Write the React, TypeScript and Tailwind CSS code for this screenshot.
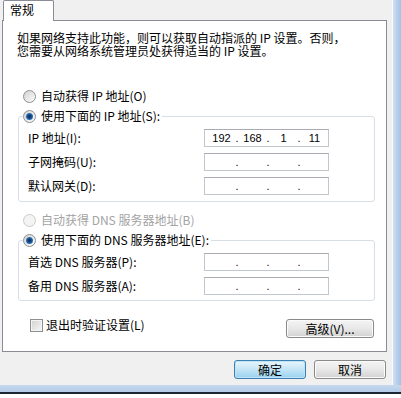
import React from 'react'

function Radio({ checked, disabled }: { checked?: boolean; disabled?: boolean }) {
  return (
    <span
      className={`w-[13px] h-[13px] shrink-0 rounded-full border flex items-center justify-center ${
        disabled
          ? 'border-[#cacaca] bg-[#f4f4f4]'
          : 'border-[#8e8f8f] bg-gradient-to-br from-[#d2d2d2] to-[#fcfcfc]'
      }`}
    >
      {checked && (
        <span className="w-[7px] h-[7px] rounded-full bg-[radial-gradient(circle,#0a2a57_0%,#1d5da4_55%,#86c9f2_100%)]" />
      )}
    </span>
  )
}

function RadioRow({ label, checked, disabled }: { label: string; checked?: boolean; disabled?: boolean }) {
  return (
    <div className="flex items-center h-[20px] gap-[5px]">
      <Radio checked={checked} disabled={disabled} />
      <span className={`whitespace-nowrap leading-[20px] ${disabled ? 'text-[#a3a3a3]' : 'text-black'}`}>{label}</span>
    </div>
  )
}

function IpInput({ parts }: { parts?: string[] }) {
  const p = parts ?? ['', '', '', '']
  return (
    <div className="w-[125px] h-[18px] border border-[#c2c6cd] border-t-[#a9acb3] bg-white flex items-center pl-[4px] font-['Liberation_Sans',sans-serif] text-[11px] leading-[16px]">
      <span className="w-[25px] text-center">{p[0]}</span>
      <span className="w-[6px] text-center">.</span>
      <span className="w-[25px] text-center">{p[1]}</span>
      <span className="w-[6px] text-center">.</span>
      <span className="w-[25px] text-center">{p[2]}</span>
      <span className="w-[6px] text-center">.</span>
      <span className="w-[25px] text-center">{p[3]}</span>
    </div>
  )
}

function FieldRow({ label, parts }: { label: string; parts?: string[] }) {
  return (
    <div className="flex items-center h-[24px] pl-[9px]">
      <span className="w-[176px] whitespace-nowrap">{label}</span>
      <IpInput parts={parts} />
    </div>
  )
}

function WinButton({ children, primary, className }: { children: React.ReactNode; primary?: boolean; className?: string }) {
  return (
    <button
      className={`h-[19px] rounded-[3px] border leading-[17px] text-[12px] text-black ${
        primary
          ? 'border-[#3c7fb1] bg-gradient-to-b from-[#e8f5fc] via-[#c4e5f6] to-[#98d1ef] shadow-[inset_0_0_0_1px_#bfe3f7]'
          : 'border-[#8a8a8a] bg-gradient-to-b from-[#f4f4f4] via-[#e8e8e8] to-[#d2d2d2] shadow-[inset_0_0_0_1px_#fbfbfb]'
      } ${className ?? ''}`}
    >
      {children}
    </button>
  )
}

export default function App() {
  return (
    <div className="w-[401px] h-[398px] overflow-hidden bg-[#f0f0f0] flex flex-col font-['Noto_Sans_CJK_SC',sans-serif] text-[12px] text-black">
      <div className="flex h-[385px]">
        <div className="w-[392px] flex flex-col">
          {/* tab */}
          <div className="h-[20px]">
            <div className="relative z-10 ml-[3px] w-[51px] h-[21px] border border-b-0 border-[#898c95] rounded-t-[2px] bg-white pl-[6px] leading-[18px]">
              常规
            </div>
          </div>

          {/* panel */}
          <div className="ml-[2px] w-[385px] h-[332px] border border-[#898c95] bg-white">
            <div className="ml-[14px] mt-[10px] leading-[13px] whitespace-nowrap">
              <div>如果网络支持此功能，则可以获取自动指派的 IP 设置。否则，</div>
              <div>您需要从网络系统管理员处获得适当的 IP 设置。</div>
            </div>

            <div className="mt-[29px] ml-[20px]">
              <RadioRow label="自动获得 IP 地址(O)" />
            </div>

            <fieldset className="ml-[15px] w-[357px] border border-[#d5dfe5] rounded-[3px] pb-[3px]">
              <legend className="ml-[4px] pr-[2px]">
                <RadioRow label="使用下面的 IP 地址(S):" checked />
              </legend>
              <FieldRow label="IP 地址(I):" parts={['192', '168', '1', '11']} />
              <FieldRow label="子网掩码(U):" />
              <FieldRow label="默认网关(D):" />
            </fieldset>

            <div className="mt-[8px] ml-[20px]">
              <RadioRow label="自动获得 DNS 服务器地址(B)" disabled />
            </div>

            <fieldset className="ml-[15px] w-[357px] border border-[#d5dfe5] rounded-[3px] pb-[2px]">
              <legend className="ml-[4px] pr-[2px]">
                <RadioRow label="使用下面的 DNS 服务器地址(E):" checked />
              </legend>
              <FieldRow label="首选 DNS 服务器(P):" />
              <FieldRow label="备用 DNS 服务器(A):" />
            </fieldset>

            <div className="mt-[14px] flex items-start justify-between pl-[27px] pr-[12px]">
              <div className="flex items-center h-[20px] gap-[3px]">
                <span className="w-[13px] h-[13px] border border-[#8e8f8f] bg-gradient-to-br from-[#d0d0d0] to-[#f8f8f8] shadow-[inset_0_0_0_1px_#f4f4f4]" />
                <span className="whitespace-nowrap">退出时验证设置(L)</span>
              </div>
              <WinButton className="mt-[4px] w-[88px]">高级(V)...</WinButton>
            </div>
          </div>

          {/* bottom buttons */}
          <div className="mt-[8px] flex justify-end gap-[8px] pr-[6px]">
            <WinButton primary className="w-[72px]">确定</WinButton>
            <WinButton className="w-[72px]">取消</WinButton>
          </div>
        </div>
        <div className="w-px bg-[#f8fafc]" />
        <div className="w-[8px] bg-gradient-to-r from-[#d3e0f1] via-[#b8cfeb] to-[#a3c2e8]" />
      </div>
      <div className="h-[7px] bg-gradient-to-b from-[#c6d8ed] to-[#b2cbe8]" />
      <div className="h-[2px] bg-[#1a2633]" />
      <div className="flex-1 bg-white" />
    </div>
  )
}
